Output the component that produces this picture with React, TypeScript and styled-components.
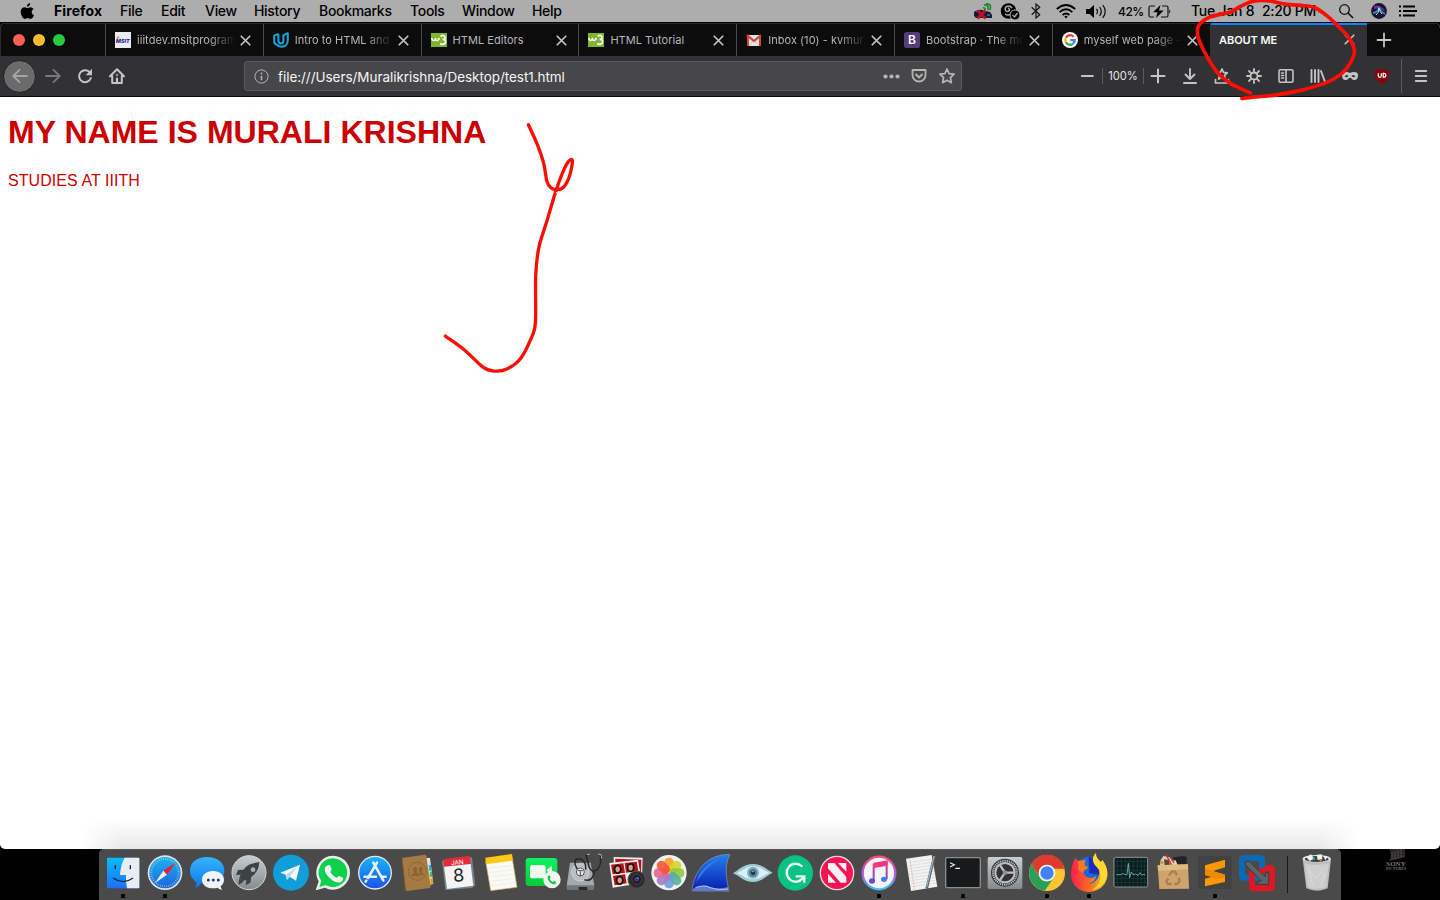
import React from "react";
import styled, { createGlobalStyle } from "styled-components";

const Global = createGlobalStyle`
  * { box-sizing: border-box; }
  body { margin: 0; background: #000; overflow: hidden; }
`;

const Screen = styled.div`
  position: relative;
  width: 1440px;
  height: 900px;
  display: flex;
  flex-direction: column;
  background: #000;
  overflow: hidden;
  font-family: Inter, "Liberation Sans", sans-serif;
`;

/* ---------- menu bar ---------- */
const MenuBar = styled.header`
  height: 23px;
  flex: none;
  display: flex;
  justify-content: space-between;
  background: #adadad;
  border-bottom: 1px solid #000;
  color: #000;
`;
const MenuGroup = styled.div`
  display: flex;
  height: 22px;
  align-items: center;
`;
const MenuItem = styled.span<{ $w: number; $bold?: boolean; $ls?: number }>`
  width: ${(p) => p.$w}px;
  font-size: 14px;
  line-height: 22px;
  font-weight: ${(p) => (p.$bold ? 700 : 500)};
  letter-spacing: ${(p) => p.$ls ?? -0.3}px;
  white-space: pre;
`;
const StatusSlot = styled.span<{ $w: number }>`
  width: ${(p) => p.$w}px;
  height: 22px;
  display: flex;
  align-items: center;
  justify-content: center;
  flex: none;
`;
const Battery = styled.span`
  width: 30px;
  font-size: 12px;
  font-weight: 500;
  letter-spacing: -0.45px;
`;
const Svg = styled.svg`
  display: block;
  flex: none;
  overflow: visible;
`;

/* ---------- browser ---------- */
const Browser = styled.section`
  height: 826px;
  flex: none;
  display: flex;
  flex-direction: column;
  border-radius: 5px;
  overflow: hidden;
  background: #fff;
`;
const TabStrip = styled.div`
  height: 33px;
  flex: none;
  display: flex;
  background: #0c0c0d;
  border-top: 1px solid #2b2b2c;
  border-left: 1px solid #2b2b2c;
`;
const Lights = styled.div`
  width: 104px;
  display: flex;
  align-items: center;
  gap: 8px;
  padding-left: 12px;
`;
const Light = styled.i<{ $c: string }>`
  width: 12px;
  height: 12px;
  border-radius: 50%;
  background: ${(p) => p.$c};
`;
const Tab = styled.div<{ $active?: boolean }>`
  width: 157.8px;
  flex: none;
  margin-top: ${(p) => (p.$active ? -1 : 0)}px;
  display: flex;
  align-items: center;
  padding-left: ${(p) => (p.$active ? 8.5 : 9)}px;
  border-left: 1px solid ${(p) => (p.$active ? "#323234" : "#4c4c4d")};
  background: ${(p) => (p.$active ? "#323234" : "transparent")};
  box-shadow: ${(p) => (p.$active ? "inset 0 2px 0 #0a84ff" : "none")};
`;
const Favicon = styled.span`
  width: 16px;
  height: 16px;
  margin-right: 6px;
  flex: none;
`;
const TabTitle = styled.span<{ $active?: boolean; $fade?: boolean; $w: number }>`
  width: ${(p) => p.$w}px;
  white-space: nowrap;
  font-size: 11px;
  line-height: 16px;
  letter-spacing: ${(p) => (p.$active ? -0.08 : 0.04)}px;
  font-weight: ${(p) => (p.$active ? 600 : 400)};
  color: ${(p) => (p.$active ? "#f9f9fa" : "#b5b5b6")};
  mask-image: ${(p) => (p.$fade ? "linear-gradient(to right, #000 72%, transparent 100%)" : "none")};
`;
const CloseSlot = styled.span`
  width: 20px;
  display: flex;
  justify-content: center;
`;
const NewTab = styled.span`
  width: 34px;
  display: flex;
  align-items: center;
  justify-content: center;
`;
const Toolbar = styled.div`
  height: 41px;
  flex: none;
  display: flex;
  align-items: center;
  padding-left: 3px;
  background: #323234;
  border-bottom: 1px solid #0c0c0d;
`;
const BackButton = styled.span`
  width: 33px;
  height: 33px;
  flex: none;
  border-radius: 50%;
  border: 1px solid #202022;
  background: #6b6b6c;
  display: flex;
  align-items: center;
  justify-content: center;
`;
const ToolSlot = styled.span<{ $w?: number }>`
  width: ${(p) => p.$w ?? 32}px;
  height: 32px;
  flex: none;
  display: flex;
  align-items: center;
  justify-content: center;
`;
const UrlBar = styled.div`
  width: 718px;
  height: 30px;
  margin-left: 111px;
  flex: none;
  display: flex;
  align-items: center;
  background: #474749;
  border: 1px solid #5a5a5c;
  border-radius: 3px;
`;
const UrlText = styled.span`
  flex: 1;
  padding: 1px 0 0 1px;
  font-size: 13.5px;
  line-height: 18px;
  letter-spacing: -0.05px;
  color: #f5f5f6;
`;
const Divider = styled.i<{ $h: number }>`
  width: 1px;
  height: ${(p) => p.$h}px;
  background: #5b5b5d;
  flex: none;
`;
const Zoom = styled.span`
  width: 41px;
  text-align: center;
  font-size: 11.2px;
  letter-spacing: -0.1px;
  color: #e4e4e5;
`;
const Page = styled.main`
  flex: 1;
  display: flex;
  flex-direction: column;
  padding: 17px 8px 0;
  color: #cc0000;
  font-family: "Liberation Sans", Arial, sans-serif;
`;
const Heading = styled.h1`
  margin: 0;
  font-size: 32px;
  line-height: 36px;
  font-weight: 700;
  letter-spacing: 0.03px;
  white-space: nowrap;
`;
const Paragraph = styled.p`
  margin: 22px 0 0;
  font-size: 16px;
  line-height: 18px;
  letter-spacing: 0.06px;
`;
const DockShade = styled.div`
  height: 30px;
  margin: auto 72px 0;
  background: linear-gradient(to bottom, rgba(0, 0, 0, 0), rgba(0, 0, 0, 0.09));
  mask-image: linear-gradient(to right, transparent, #000 40px, #000 calc(100% - 40px), transparent);
`;

/* ---------- dock ---------- */
const Desktop = styled.footer`
  flex: 1;
  display: flex;
  padding-left: 99px;
`;
const Dock = styled.div`
  width: 1242px;
  height: 51px;
  flex: none;
  display: flex;
  padding: 2px 3px 0;
  background: #4a4a4a;
  border-top: 1px solid #555;
  border-radius: 5px 5px 0 0;
`;
const DockItem = styled.div`
  width: 42px;
  flex: none;
  display: flex;
  flex-direction: column;
  align-items: center;
  margin-top: -1px;
`;
const RunningDot = styled.i`
  width: 4px;
  height: 4px;
  margin-top: 1px;
  border-radius: 1px;
  background: #000;
`;
const DockDivider = styled.i`
  width: 1px;
  height: 37px;
  flex: none;
  margin: 4px 8px 0 9px;
  background: #191919;
`;
const Wallpaper = styled.div`
  margin-left: 44px;
  width: 22px;
  display: flex;
  flex-direction: column;
  align-items: center;
  color: #777;
  font-family: "Liberation Serif", serif;
  font-size: 7px;
  font-weight: 700;
  line-height: 6px;
`;
const WallSmall = styled.span`
  font-size: 4px;
  line-height: 3px;
`;
const Ink = styled.svg`
  position: absolute;
  inset: 0;
  pointer-events: none;
`;

const Line = ({ d, c = "#c4c4c5", w = 2, s = 16 }: { d: string; c?: string; w?: number; s?: number }) => (
  <Svg width={s} height={s} viewBox="0 0 16 16" fill="none" stroke={c} strokeWidth={w} strokeLinecap="round" strokeLinejoin="round">
    <path d={d} />
  </Svg>
);

const favicons: Record<string, React.ReactNode> = {
  msit: (
    <>
      <rect width="16" height="16" fill="#ececf0" />
      <circle cx="3" cy="5.7" r="1.4" fill="#e7a13c" />
      <text x="0.8" y="11" fontSize="5.4" fontWeight="800" fontStyle="italic" fill="#22209a" textLength="14" lengthAdjust="spacingAndGlyphs">MSIT</text>
    </>
  ),
  udacity: (
    <path d="M5.400 1.800 1.200 3.600v5.200c0 2.600 1.500 4 3.700 4.300M5.400 1.800v6.800c0 1.900.9 2.900 2.500 2.900 1.600 0 2.500-1 2.500-2.900V3.100l4.400-1.900v7.400c0 3.900-2.500 6.200-6 6.200-2.200 0-3.900-.7-5-2.200" fill="none" stroke="#14a4db" strokeWidth="2" strokeLinejoin="round" />
  ),
  w3: (
    <>
      <rect y="1" width="16" height="14" fill="#7fb42f" />
      <path d="M.8 6c.2 3 2.700 3.400 3.700.6.600 2.800 3.200 2.400 3.700-.6" fill="none" stroke="#fff" strokeWidth="1.700" strokeLinejoin="round" />
      <path d="M9.600 4.200c2-1.300 4.500-.8 4.500 1.200 0 1.300-1.200 1.900-2.500 1.900 2 0 3.200.9 3 2.600-.3 2.600-3.600 3-5.400 1.600" fill="none" stroke="#fff" strokeWidth="1.700" />
    </>
  ),
  gmail: (
    <>
      <rect x="1" y="3" width="14" height="11" fill="#e3e3e3" />
      <path d="M1 3.200 8 9l7-5.800" fill="none" stroke="#d14836" strokeWidth="2.200" />
      <path d="M2 3.500V14M14 3.500V14" stroke="#d14836" strokeWidth="2" />
      <path d="m3 14 4-4.500M13 14 9 9.500" stroke="#bbb" strokeWidth=".6" />
    </>
  ),
  bootstrap: (
    <>
      <rect width="16" height="16" rx="2.500" fill="#563d7c" />
      <text x="8" y="12.300" fontSize="12" fontWeight="600" textAnchor="middle" fill="#fff">B</text>
    </>
  ),
  google: (
    <>
      <circle cx="8" cy="8" r="8" fill="#fff" />
      <g fill="none" strokeWidth="2.300">
        <path d="M11.500 4.700A4.700 4.700 0 0 0 3.900 5.700" stroke="#ea4335" />
        <path d="M3.900 5.700a4.700 4.700 0 0 0 0 4.600" stroke="#fbbc05" />
        <path d="M3.900 10.300a4.700 4.700 0 0 0 7.200 1.300" stroke="#34a853" />
        <path d="M11.100 11.600A4.700 4.700 0 0 0 12.700 8.100H8.200" stroke="#4285f4" />
      </g>
    </>
  ),
};

const tabs: [string, string, boolean][] = [
  ["msit", "iiitdev.msitprogram", true],
  ["udacity", "Intro to HTML and", true],
  ["w3", "HTML Editors", false],
  ["w3", "HTML Tutorial", false],
  ["gmail", "Inbox (10) - kvmur", true],
  ["bootstrap", "Bootstrap · The mo", true],
  ["google", "myself web page -", true],
];

const menus: [string, number][] = [
  ["File", 41], ["Edit", 44], ["View", 49], ["History", 65], ["Bookmarks", 91], ["Tools", 52], ["Window", 70], ["Help", 40],
];

const CloseX = () => <Line d="M4 4l8 8M12 4l-8 8" w={1.6} s={17} />;

/* Dock artwork: each drawing is 126 units square, starting at its own x. */
type App = { name: string; x: number; on?: boolean; art: React.ReactNode };

const petals = ["#ff9d1e", "#d7d52b", "#8fca3d", "#4fb58e", "#6f9bdd", "#a57cc4", "#e0669a", "#f4553a"];

const apps: App[] = [
  {
    name: "finder", x: 36, on: true, art: (
      <>
        <rect x="51" y="113" width="97" height="92" rx="3" fill="url(#finder)" />
        <path d="M104 113h41q3 0 3 3v86q0 3-3 3h-34q-4-18-3-40H90q2-32 14-52z" fill="#e8edf5" />
        <path d="M76 137v9M121 137v9" stroke="#10243e" strokeWidth="4" strokeLinecap="round" />
        <path d="M70 175q30 20 58 0" fill="none" stroke="#10243e" strokeWidth="3.500" strokeLinecap="round" />
      </>
    ),
  },
  {
    name: "safari", x: 162, on: true, art: (
      <>
        <circle cx="225" cy="158" r="52" fill="#dfe3e6" />
        <circle cx="225" cy="158" r="47" fill="url(#safari)" />
        <circle cx="225" cy="158" r="41" fill="none" stroke="#b6e1f7" strokeWidth="6" strokeDasharray="1.500 4.940" />
        <path d="M257 128 220 152l11 12z" fill="#ec2029" />
        <path d="M195 189l25-37 11 12z" fill="#f1f1f1" />
      </>
    ),
  },
  {
    name: "messages", x: 288, art: (
      <>
        <path d="M351 111c31 0 52 17 52 41s-21 41-52 41c-7 0-13-1-18-3-4 7-10 12-19 15 5-6 6-13 5-19-12-8-19-20-19-34 0-24 20-41 51-41z" fill="url(#blue)" />
        <path d="M369 153c20 0 33 11 33 26 0 8-4 15-10 19 0 5 2 8 5 11-7-1-11-3-14-6-4 1-9 2-14 2-20 0-33-11-33-26s13-26 33-26z" fill="#eff5fb" />
        <g fill="#1a3f86"><circle cx="355" cy="180" r="4.500" /><circle cx="370" cy="180" r="4.500" /><circle cx="385" cy="180" r="4.500" /></g>
      </>
    ),
  },
  {
    name: "launchpad", x: 414, art: (
      <>
        <circle cx="477" cy="158" r="51" fill="url(#steel)" stroke="#d2d5d6" strokeWidth="3" />
        <path d="M508 127c-25 2-37 8-47 22l-17 1-6 15 14-1-4 9 11 9 10-2-2 16 14-8 3-18c15-10 23-23 24-43z" fill="#3e4244" />
        <circle cx="489" cy="149" r="7" fill="#a7b0b2" />
        <path d="M449 174q-4 8-3 20 9-3 15-11z" fill="#3e4244" />
      </>
    ),
  },
  {
    name: "telegram", x: 540, art: (
      <>
        <circle cx="603" cy="158" r="54" fill="#109ed9" />
        <path d="M571 158l59-24-12 48-19-12-8 9-4-15z" fill="#f5fafc" />
        <path d="m587 164 34-23-22 29-8 9z" fill="#bdd9e8" />
      </>
    ),
  },
  {
    name: "whatsapp", x: 666, art: (
      <>
        <path d="M729 107a51 51 0 1 1-24 96l-28 8 9-27a51 51 0 0 1 43-77z" fill="#eceeed" />
        <path d="M729 115a43 43 0 1 1-22 80l-19 6 6-18a43 43 0 0 1 35-68z" fill="#0bd14c" />
        <path d="M711 137c4-3 8-3 10 1l4 9c1 4-5 7-4 9 4 8 10 13 18 17 3 1 6-6 9-5l10 5c4 2-1 10-5 13-16 9-50-20-49-39 0-5 3-8 7-10z" fill="#f4f7f5" />
      </>
    ),
  },
  {
    name: "appstore", x: 792, art: (
      <>
        <circle cx="855" cy="158" r="51" fill="#e6eaf0" />
        <circle cx="855" cy="158" r="47" fill="url(#store)" />
        <g fill="none" stroke="#e9f3ff" strokeWidth="7.500" strokeLinecap="round">
          <path d="m850 128 30 53M861 128l-27 46M823 170h35M874 170h13M829 182l-2 3" />
        </g>
      </>
    ),
  },
  {
    name: "contacts", x: 18, art: (
      <>
        <path d="M105 113l15 1 10 78-22 5z" fill="#dfe5ea" />
        <path d="M116 135l7 0 1 17-7 0z" fill="#23aee0" /><path d="M119 155h7l1 16h-8z" fill="#54bb4a" /><path d="M121 175h8v17h-8z" fill="#f39a1e" />
        <path d="M36 116q0-3 4-3l64-9q4 0 5 4l13 91q0 4-4 5l-66 9q-4 0-5-4z" fill="#a67a43" />
        <path d="M36 116l10 97" stroke="#7b5427" strokeWidth="3" />
        <circle cx="82" cy="154" r="27" fill="none" stroke="#8c6430" strokeWidth="2.500" />
        <path d="M63 168c2-6 9-7 9-10-4-7-5-16 3-18 7 0 8 8 5 17 1 4 8 4 10 12zM88 164c1-3 0-6 0-9-3-9-1-15 5-15 7 1 7 11 3 17 0 3 6 4 7 9z" fill="#8c6430" />
      </>
    ),
  },
  {
    name: "calendar", x: 144, art: (
      <>
        <path d="M156 123l12-6 78-5 10 84-10 8-80 6z" fill="#758290" />
        <path d="M160 118l78-11 4 25-79 11z" fill="#e52b38" />
        <path d="M162 140l80-8 8 65-79 10z" fill="#f4f4f5" />
        <text x="183" y="134" fontSize="19" fill="#fff" transform="rotate(-5 200 128)">JAN</text>
        <text x="206" y="185" fontSize="54" textAnchor="middle" fill="#222" transform="rotate(-4 206 165)">8</text>
      </>
    ),
  },
  {
    name: "notes", x: 270, art: (
      <>
        <path d="M287 124l80-8 14 86-79 10z" fill="#fafaf5" stroke="#cfa44a" strokeWidth="2" />
        <path d="M286 113l80-11 3 20-81 11z" fill="#fbc913" />
        {[0, 1, 2, 3, 4].map((i) => <path key={i} d={`M${292 + i * 2} ${145 + i * 13}l80-9`} stroke="#dededa" strokeWidth="1.200" />)}
      </>
    ),
  },
  {
    name: "facetime", x: 396, art: (
      <>
        <rect x="407" y="114" width="95" height="84" rx="9" fill="url(#green)" />
        <rect x="420" y="135" width="47" height="40" rx="8" fill="#effbf0" />
        <path d="M469 151l15-14q3 0 2 6v25z" fill="#e2f5e4" />
        <circle cx="486" cy="179" r="26" fill="#f3f5f4" />
        <path d="M474 168c4-4 7-1 8 4l-3 5q4 7 9 9l5-3c5 2 7 6 3 9-10 5-27-12-22-24z" fill="#14c943" />
      </>
    ),
  },
  {
    name: "diskutility", x: 522, art: (
      <>
        <path d="M540 128h62l11 70-4 12h-76l-3-12z" fill="#a4a9ad" />
        <path d="M530 196h83l-4 14h-76z" fill="#6f757a" /><path d="M566 201h26v9h-26z" fill="#2a2c2e" />
        <circle cx="571" cy="157" r="26" fill="#b9bec1" stroke="#dbdfe2" strokeWidth="2" />
        <circle cx="571" cy="156" r="12" fill="#e8eaeb" stroke="#555" strokeWidth="3" />
        <path d="M571 154v14M564 152h14" stroke="#444" strokeWidth="3" />
        <path d="M587 149c2-24-12-36-27-32-8 4-6 20 2 30M592 104c-4 1-3 6-1 12 5 20 6 36 20 38 16-4 22-22 21-40 0-6 0-9-4-11M613 154c-1 18-12 32-30 25" fill="none" stroke="#24282a" strokeWidth="4.500" />
        <path d="M599 102l-8 2M624 102l9 2q3 4 1 11" stroke="#b3b8bb" strokeWidth="3" fill="none" />
      </>
    ),
  },
  {
    name: "photobooth", x: 648, art: (
      <>
        <path d="M671 111l87 2-2 62-84-3z" fill="#eee" /><path d="M676 116l78 3-1 50-77-4z" fill="#b90f18" />
        <path d="M658 129l86-10 12 70-88 14z" fill="#eee" />
        <path d="M663 134l37-4 5 28-37 5zM704 129l36-4 5 28-37 5zM669 168l36-5 5 27-36 6z" fill="#b90f18" />
        {[[683, 148], [722, 143], [689, 181]].map(([x, y]) => (
          <g key={x}><ellipse cx={x} cy={y} rx="12" ry="14" fill="#1d0f10" /><ellipse cx={x} cy={y} rx="6.500" ry="8.500" fill="#d8a18c" /></g>
        ))}
        <circle cx="740" cy="179" r="26" fill="#2b2c2e" stroke="#505255" strokeWidth="3" />
        <circle cx="740" cy="178" r="14" fill="#131722" stroke="#555" strokeWidth="2" /><circle cx="740" cy="178" r="8" fill="#433171" /><circle cx="743" cy="174" r="3" fill="#3b9aaa" />
      </>
    ),
  },
  {
    name: "photos", x: 774, art: (
      <>
        <circle cx="837" cy="158" r="53" fill="#f1f1f0" />
        {petals.map((c, i) => <rect key={c} x="823" y="113" width="28" height="44" rx="13" fill={c} opacity=".9" transform={`rotate(${i * 45} 837 159)`} />)}
      </>
    ),
  },
  {
    name: "wireshark", x: 0, art: (
      <>
        <path d="M6 212c7-63 47-109 113-109q3 4-3 9c-12 28-8 63 1 101z" fill="url(#fin)" stroke="#8599b8" strokeWidth="2" />
        <path d="M18 191q35-60 78-76-45 12-69 48z" fill="#4c94f3" opacity=".55" />
        <path d="M9 206q27-15 50-6 28 10 56 0v14H6z" fill="#5d7bcd" /><path d="M16 203q28-10 44 0 25 10 54 4" fill="none" stroke="#dae4fb" strokeWidth="2" />
      </>
    ),
  },
  {
    name: "eye", x: 126, art: (
      <>
        <path d="M129 160c20-12 31-28 60-28s39 16 59 26c-19 8-31 28-59 28s-38-17-60-26z" fill="#9fcbd8" />
        <path d="M140 160c20-9 30-21 49-21s30 11 50 20c-19 7-30 19-50 19s-31-12-49-18z" fill="#d9f0f5" />
        <circle cx="189" cy="158" r="18" fill="#82b2c4" /><circle cx="189" cy="158" r="12" fill="#4f7f95" /><circle cx="189" cy="158" r="6" fill="#17242c" /><circle cx="189" cy="155" r="2" fill="#fff" />
      </>
    ),
  },
  {
    name: "grammarly", x: 252, art: (
      <>
        <circle cx="316" cy="159" r="53" fill="#08c383" />
        <path d="M335 138a27 27 0 1 0 4 36" fill="none" stroke="#f1f8f5" strokeWidth="7" strokeLinecap="round" />
        <path d="M317 169h26v19" fill="none" stroke="#f1f8f5" strokeWidth="7" />
      </>
    ),
  },
  {
    name: "news", x: 378, art: (
      <>
        <circle cx="441" cy="159" r="50" fill="#fb1252" stroke="#e6dfe2" strokeWidth="4" />
        <path d="M414 129h19l36 42v17h-17l-38-43z" fill="#f6f1f3" /><path d="M444 129h25v26zM414 161v27h24z" fill="#f6f1f3" />
      </>
    ),
  },
  {
    name: "itunes", x: 504, on: true, art: (
      <>
        <circle cx="567" cy="159" r="49" fill="#f7f5fa" stroke="url(#itring)" strokeWidth="7" />
        <path d="M551 183v-49l39-7v51" fill="none" stroke="url(#note)" strokeWidth="6" /><path d="M551 128l42-7v16l-42 7z" fill="#ee3b82" />
        <ellipse cx="546" cy="183" rx="9" ry="8" fill="#6b47da" /><ellipse cx="582" cy="178" rx="9" ry="8" fill="#3f7fe9" />
      </>
    ),
  },
  {
    name: "textedit", x: 630, art: (
      <>
        <path d="M648 116l77-11 17 95-79 13z" fill="#f3f2f0" />
        {[0, 1, 2, 3, 4, 5, 6, 7, 8].map((i) => <path key={i} d={`M${653 + i * 1.4} ${128 + i * 9}l73-10`} stroke="#c9ccd0" strokeWidth="1.500" />)}
        <path d="M659 115l15 96" stroke="#e9a8a4" strokeWidth="1.500" />
        <path d="M733 108l-23 98" stroke="#5c6a78" strokeWidth="8" /><path d="M732 108l-22 92" stroke="#a9bccb" strokeWidth="3" />
      </>
    ),
  },
  {
    name: "terminal", x: 756, on: true, art: (
      <>
        <rect x="767" y="113" width="104" height="90" rx="4" fill="#18191b" stroke="#829199" strokeWidth="4" />
        <path d="M780 128l13 6-13 7M796 145h14" fill="none" stroke="#ececec" strokeWidth="3.500" />
      </>
    ),
  },
  {
    name: "settings", x: 12, art: (
      <>
        <rect x="23" y="111" width="104" height="96" rx="5" fill="url(#steel)" />
        <circle cx="75" cy="158" r="42" fill="#313233" />
        <circle cx="75" cy="158" r="36" fill="none" stroke="#c6c8c9" strokeWidth="6" strokeDasharray="3.200 2.450" />
        <circle cx="75" cy="158" r="29" fill="none" stroke="#bcbebf" strokeWidth="6" />
        <path d="M75 158h29M75 158l-16-24M75 158l-16 24" stroke="#bcbebf" strokeWidth="7" /><circle cx="75" cy="158" r="7" fill="#8c8e8f" />
      </>
    ),
  },
  {
    name: "chrome", x: 138, on: true, art: (
      <>
        <circle cx="201" cy="159" r="54" fill="#fac52f" />
        <path d="M154 132a54 54 0 0 1 99 12l1 2h-53a25 25 0 0 0-23 23z" fill="#dd3b30" />
        <path d="M154 132a54 54 0 0 0 40 80l28-40a25 25 0 0 1-44-2z" fill="#2a9f57" />
        <path d="M201 134h49a54 54 0 0 0-95-3z" fill="#dd3b30" />
        <circle cx="201" cy="159" r="25" fill="#f2f5f5" /><circle cx="201" cy="159" r="20" fill="#4383ef" />
      </>
    ),
  },
  {
    name: "firefox", x: 264, on: true, art: (
      <>
        <circle cx="328" cy="158" r="48" fill="#1569d6" />
        <path d="M326 110a44 44 0 0 1 33 55l-31-5z" fill="#1b2bbc" />
        <path d="M286 113q5 6 8 10 16-2 23-4-5 9-3 18l10 4q-2 8-12 10-4 14 8 20 17 7 28-3c-3 18-18 24-32 19 25 13 47-13 41-40-4-15-17-18-18-27q0-12 9-21 0 16 16 28l3-7c16 24 22 49 6 73-32 42-102 24-100-35 1-18 6-33 13-45z" fill="url(#fox)" />
        <path d="M347 99q1 16 16 28l4-7c18 24 19 48 6 66-11 17-28 23-38 24 29-14 34-52 15-69-15-15-14-29-3-42z" fill="#ffd92e" />
        <path d="M294 123q16-2 23-4-5 9-3 18l10 4q-2 8-12 10l-6 7-10-8z" fill="#ff7a1d" />
      </>
    ),
  },
  {
    name: "activity", x: 390, art: (
      <>
        <rect x="402" y="112" width="101" height="89" rx="5" fill="#0d1d1e" stroke="#8a9498" strokeWidth="3" />
        <path d="M412 115v83M424 115v83M436 115v83M448 115v83M460 115v83M472 115v83M484 115v83M494 115v83M405 124h96M405 138h96M405 152h96M405 176h96M405 188h96" stroke="#1f4b49" strokeWidth="1.500" />
        <path d="M409 164h14l6-4 5 4h7l4-34 4 43 5-17 5 8 8-2 7 5 6-9 4 6h12" fill="none" stroke="#6bc1b1" strokeWidth="2.500" />
      </>
    ),
  },
  {
    name: "unarchive", x: 516, art: (
      <>
        <path d="M580 112l32-4 8 4v26h-40z" fill="#242426" /><path d="M541 122l9-14 20 4 12 12v16h-42z" fill="#d9cdbb" />
        <path d="M552 118l14 2 4 16-16 2z" fill="#57463a" /><path d="M573 124l14-3 6 15-18 2z" fill="#ead8bc" />
        <path d="M557 102l18 33M570 111l12 18" stroke="#cf2a25" strokeWidth="4" /><circle cx="546" cy="128" r="5" fill="#e58b32" />
        <path d="M533 136l91-3 3 73-89 1z" fill="#cda56c" /><path d="M533 136l91-3v15l-90 4z" fill="#e0bc85" />
        <g fill="none" stroke="#a98149" strokeWidth="7"><path d="M567 167l9-13h8l7 12M596 173l3 10-8 9h-8M575 192h-12l-4-8 6-9" /></g>
      </>
    ),
  },
  {
    name: "sublime", x: 642, on: true, art: (
      <>
        <rect x="654" y="108" width="101" height="99" rx="5" fill="#424242" />
        <path d="M675 136l60-17v23l-36 11 36 11v22l-60 13v-23l36-10-36-10z" fill="#ff9800" />
        <path d="M675 146l60 18v8l-24 4-36-10z" fill="#ee8900" />
      </>
    ),
  },
  {
    name: "vmware", x: 108, art: (
      <>
        <rect x="126" y="114" width="60" height="59" rx="5" fill="none" stroke="#0e69b5" strokeWidth="18" />
        <path d="M156 173v26q0 6 6 6h48q6 0 6-6v-49q0-6-6-6h-15" fill="none" stroke="#df1724" strokeWidth="18" strokeLinejoin="round" />
        <path d="M147 150l18 16v18h-18z" fill="#df1724" />
        <path d="M177 144h18v18l-8 3-10-10z" fill="#df1724" />
        <path d="M136 134v-10h11l49 46v-11h10v34h-33v-10h12z" fill="#5c6367" stroke="#34393c" strokeWidth="2.500" />
      </>
    ),
  },
];

const trash: App = {
  name: "trash", x: 288, art: (
    <>
      <path d="M308 117q42-12 85 0l-10 88q-32 14-64 0z" fill="#bcbdbe" />
      <path d="M314 130q36 10 72 0l-8 71q-28 10-54 0z" fill="#cecece" />
      <ellipse cx="350" cy="116" rx="42" ry="11" fill="#e3e5e5" /><ellipse cx="350" cy="117" rx="36" ry="9" fill="#3b4245" />
      <path d="M319 112l14-9 9 13-13 7zM350 104l15-1 2 15-14 2zM370 108l12 3-6 10z" fill="#eef2f3" /><circle cx="342" cy="116" r="4" fill="#22a2b5" /><circle cx="362" cy="122" r="4" fill="#d96a33" />
      <path d="M326 140l12 58M370 146l-20 30-20-20M376 160l-14 36" stroke="#e6e6e6" strokeWidth="3" opacity=".5" fill="none" />
    </>
  ),
};

const DockIcon = ({ app }: { app: App }) => (
  <DockItem>
    <Svg width="42" height="42" viewBox={`${app.x} 93 126 126`}>{app.art}</Svg>
    {app.on && <RunningDot />}
  </DockItem>
);

const Gradient = ({ id, stops, h }: { id: string; stops: string[]; h?: boolean }) => (
  <linearGradient id={id} x1="0" y1="0" x2={h ? 1 : 0} y2={h ? 0 : 1}>
    {stops.map((c, i) => <stop key={i} offset={i / (stops.length - 1)} stopColor={c} />)}
  </linearGradient>
);

/* Smooth curve through hand-drawn points. */
const curve = (pts: number[][]) =>
  pts.slice(1).reduce((d, p, i) => {
    const a = pts[Math.max(0, i - 1)], b = pts[i], c = pts[Math.min(pts.length - 1, i + 2)];
    return d + `C${b[0] + (p[0] - a[0]) / 6} ${b[1] + (p[1] - a[1]) / 6} ${p[0] - (c[0] - b[0]) / 6} ${p[1] - (c[1] - b[1]) / 6} ${p[0]} ${p[1]}`;
  }, `M${pts[0][0]} ${pts[0][1]}`);

const ring = curve([[1250, 92.5], [1243, 89.5], [1230, 83], [1217, 72], [1207, 57], [1200, 43], [1197, 33], [1199, 24], [1210, 16.500], [1230, 11.500], [1240, 6], [1250, 1.500], [1260, 0], [1270, 0.500], [1283, 3.500], [1300, 5], [1314, 7], [1326, 15], [1338, 26], [1349, 38], [1354, 51], [1349, 64], [1341, 73.500], [1326.500, 82], [1300, 90], [1273, 95], [1255, 96.500], [1241.500, 98]]);
const hook = curve([[528, 124.300], [537.300, 145], [543.300, 163], [546.500, 181], [550.500, 187.300], [556.700, 189.300], [563.300, 186.700], [569.300, 175], [572, 160], [567.300, 162], [561.500, 174], [555, 192], [547, 219], [538.500, 247], [535.300, 275], [535, 322], [530.500, 338.500], [520, 358.300], [507, 368.300], [495, 370.700], [483.300, 367.300], [463.500, 349], [445, 335.700]]);

export default function App() {
  return (
    <Screen>
      <Global />
      <MenuBar>
        <MenuGroup>
          <StatusSlot $w={54}>
            <Svg width="15" height="17" viewBox="0 0 15 17">
              <path d="M10.100 0c.2 1.900-1.400 3.700-3.200 3.700C6.700 1.900 8.300.2 10.100 0zM10.200 4.200c1.500 0 2.700.8 3.300 1.700-2.600 1.600-2.200 5.100.5 6.200-.7 1.900-2 3.900-3.500 3.900-1.100 0-1.400-.7-2.800-.7s-1.800.7-2.800.7C2.700 16-.1 10.600.9 7.300c.6-1.900 2.100-3 3.700-3 1.200 0 2.200.8 3 .8s1.700-.9 2.600-.9z" />
            </Svg>
          </StatusSlot>
          <MenuItem $w={66} $bold $ls={0.1}>Firefox</MenuItem>
          {menus.map(([m, w]) => <MenuItem key={m} $w={w}>{m}</MenuItem>)}
        </MenuGroup>
        <MenuGroup>
          <StatusSlot $w={28}>
            <Svg width="18" height="17" viewBox="0 0 18 17">
              <path d="M0 9q3-3 8-2l8 2 2 3v3H2l-2-2z" fill="#17183d" /><path d="M2 8h4M13 12h3" stroke="#8788a8" />
              <path d="M9 5q2-1 2 2M10 2q5-1 4 5M12 1q6-1 4 6" fill="none" stroke="#188a26" strokeWidth="1.700" />
              <path d="M3.500 7.500l8 8M11.500 7.500l-8 8" stroke="#c50f18" strokeWidth="2.700" />
            </Svg>
          </StatusSlot>
          <StatusSlot $w={25}>
            <Svg width="20" height="17" viewBox="0 0 20 17">
              <circle cx="8.500" cy="8" r="7.800" /><path d="M12 5C9 1 3 4 6 8c3 2 5-2 2-3M5 11c3 2 6 1 7-2" fill="none" stroke="#adadad" strokeWidth="1.500" />
              <circle cx="15" cy="12" r="5" stroke="#adadad" strokeWidth="1" /><path d="M12.500 12l2 2 3-4" fill="none" stroke="#adadad" strokeWidth="1.300" />
            </Svg>
          </StatusSlot>
          <StatusSlot $w={27}>
            <Svg width="10" height="16" viewBox="0 0 10 16"><path d="M.7 4.200l8 7.600L5 15V1l3.700 3.200-8 7.600" fill="none" stroke="#111" strokeWidth="1.200" /></Svg>
          </StatusSlot>
          <StatusSlot $w={33}>
            <Svg width="20" height="15" viewBox="0 0 20 15"><g fill="none" stroke="#000" strokeWidth="1.900"><path d="M.8 5q9.200-8 18.400 0M3.700 8.100q6.300-5.500 12.600 0M6.600 11q3.400-2.800 6.800 0" /></g><path d="M8.300 12.500q1.700-1.500 3.400 0L10 14.500z" /></Svg>
          </StatusSlot>
          <StatusSlot $w={29}>
            <Svg width="21" height="15" viewBox="0 0 21 15"><path d="M0 5h3.500L8 1v13l-4.500-4H0z" /><path d="M10.500 4.800q2 2.700 0 5.400M13.600 3q3.400 4.500 0 9M16.800 1.200q5 6.300 0 12.600" fill="none" stroke="#111" strokeWidth="1.200" /></Svg>
          </StatusSlot>
          <StatusSlot $w={7} />
          <Battery>42%</Battery>
          <Svg width="24" height="13" viewBox="0 0 24 13"><path d="M7 1H2.500Q1 1 1 2.500v8Q1 12 2.500 12H6M14 1h4.500Q20 1 20 2.500v8q0 1.500-1.500 1.500H13" fill="none" stroke="#111" strokeWidth="1.200" /><path d="M12.500 0 5 7.200h4.500L8 13l7.700-7.500H11zM21.300 4.500q2 2 0 4z" /></Svg>
          <StatusSlot $w={19} />
          <MenuItem $w={71} $ls={-0.25}>Tue Jan 8</MenuItem>
          <MenuItem $w={68} $ls={-0.3}>2:20 PM</MenuItem>
          <StatusSlot $w={32}>
            <Svg width="16" height="16" viewBox="0 0 16 16" fill="none" stroke="#111"><circle cx="6.500" cy="6.500" r="4.800" strokeWidth="1.300" /><path d="M10 10l5 5" strokeWidth="1.600" /></Svg>
          </StatusSlot>
          <StatusSlot $w={34}>
            <Svg width="16" height="16" viewBox="0 0 16 16"><circle cx="8" cy="8" r="7.900" fill="#16152f" /><path d="M3 3q5-2 10 3l1 3q-5-5-11-3z" fill="#7a2a93" /><path d="M2 10Q7 9 8 5q2 4 6 6" fill="none" stroke="#2f8fc4" strokeWidth="1.800" /><path d="M5 12q3-2 3-7 1 4 3 6" fill="none" stroke="#b8e4f0" strokeWidth="1" /></Svg>
          </StatusSlot>
          <StatusSlot $w={24}>
            <Svg width="18" height="12" viewBox="0 0 18 12" stroke="#000" strokeWidth="1.800"><path d="M4 1.500h12M4 6h14M4 10.500h12M0 1.500h2M0 6h2M0 10.500h2" /></Svg>
          </StatusSlot>
          <StatusSlot $w={20} />
        </MenuGroup>
      </MenuBar>

      <Browser>
        <TabStrip>
          <Lights><Light $c="#ff5f57" /><Light $c="#ffbd2e" /><Light $c="#28ca42" /></Lights>
          {tabs.map(([icon, title, fade], i) => (
            <Tab key={i}>
              <Favicon><Svg width="16" height="16" viewBox="0 0 16 16">{favicons[icon]}</Svg></Favicon>
              <TabTitle $w={98.5} $fade={fade}>{title}</TabTitle>
              <CloseSlot><CloseX /></CloseSlot>
            </Tab>
          ))}
          <Tab $active>
            <TabTitle $active $w={120.5}>ABOUT ME</TabTitle>
            <CloseSlot><CloseX /></CloseSlot>
          </Tab>
          <NewTab><Line d="M8 1.500v13M1.500 8h13" w={1.800} /></NewTab>
        </TabStrip>
        <Toolbar>
          <BackButton><Line d="M15 8H1.500M7.500 1.800 1.300 8l6.200 6.200" c="#a5a5a6" w={1.800} /></BackButton>
          <ToolSlot $w={33}><Line d="M1 8h13.500M8.500 1.800 14.700 8l-6.200 6.200" c="#78787a" w={1.800} /></ToolSlot>
          <ToolSlot><Svg width="16" height="16" viewBox="0 0 16 16"><path d="M13 4.700A6 6 0 1 0 13.800 10" fill="none" stroke="#c4c4c5" strokeWidth="2" strokeLinecap="round" /><path d="M15 .8v6.400H8.700z" fill="#c4c4c5" /></Svg></ToolSlot>
          <ToolSlot><Svg width="16" height="16" viewBox="0 0 16 16" fill="none" stroke="#c4c4c5" strokeWidth="2" strokeLinecap="round" strokeLinejoin="round"><path d="M1 8.200 8 1.200l7 7M3.200 8v7h9.600V8" /><path d="M8 10.500V15" strokeWidth="2.200" /><circle cx="8" cy="7" r=".3" /></Svg></ToolSlot>
          <UrlBar>
            <ToolSlot><Svg width="15" height="15" viewBox="0 0 15 15"><circle cx="7.500" cy="7.500" r="6.600" fill="none" stroke="#b6b6b7" /><circle cx="7.500" cy="4.500" r=".9" fill="#b6b6b7" /><path d="M7.500 6.800v4.500" stroke="#b6b6b7" strokeWidth="1.500" /></Svg></ToolSlot>
            <UrlText>file:///Users/Muralikrishna/Desktop/test1.html</UrlText>
            <ToolSlot $w={28}><Svg width="17" height="5" viewBox="0 0 17 5" fill="#b6b6b7"><circle cx="2.500" cy="2.500" r="2.100" /><circle cx="8.500" cy="2.500" r="2.100" /><circle cx="14.500" cy="2.500" r="2.100" /></Svg></ToolSlot>
            <ToolSlot $w={28}><Line d="M1.500 2h13v5a6.500 6.500 0 0 1-13 0zM5 6.500l3 3 3-3" c="#b6b6b7" w={1.800} /></ToolSlot>
            <ToolSlot $w={28}><Line d="M8 1l2.100 4.700 5 .5-3.700 3.500 1 5L8 12.200l-4.400 2.500 1-5L.9 6.200l5-.5z" c="#b6b6b7" w={1.700} /></ToolSlot>
          </UrlBar>
          <ToolSlot $w={110} />
          <ToolSlot $w={30}><Line d="M2.800 8h11" /></ToolSlot>
          <Divider $h={16} />
          <Zoom>100%</Zoom>
          <Divider $h={16} />
          <ToolSlot $w={27}><Line d="M8 1.500v13M1.500 8h13" /></ToolSlot>
          <ToolSlot $w={3} />
          <ToolSlot><Line d="M8 1v9.500M3.500 6.500 8 11l4.500-4.500M2 15h12" w={1.900} /></ToolSlot>
          <ToolSlot><Line d="M8 1l1.600 3.400 3.700.4-2.800 2.500.8 3.700L8 9.200 4.700 11l.8-3.700-2.800-2.500 3.700-.4zM1.500 11.500V15h13v-3.500" w={1.700} /></ToolSlot>
          <ToolSlot><Line d="M8 4.500a3.500 3.500 0 1 1 0 7 3.500 3.500 0 0 1 0-7zM8 1v2.500M8 12.500V15M1 8h2.500M12.500 8H15M3 3l1.800 1.800M11.200 11.200 13 13M3 13l1.800-1.800M11.200 4.800 13 3" w={1.800} /></ToolSlot>
          <ToolSlot><Line d="M2.500 1.700h11q1.500 0 1.500 1.500v9.600q0 1.500-1.500 1.500h-11Q1 14.300 1 12.800V3.200q0-1.500 1.500-1.500zM8 2v12M3.500 5h2M3.500 7.500h2M3.500 10h2" w={1.600} /></ToolSlot>
          <ToolSlot><Line d="M1.500 2v12M5 2v12M8.500 2v12M11 3l4 11" w={1.900} /></ToolSlot>
          <ToolSlot><Svg width="16" height="12" viewBox="0 0 16 12"><path fillRule="evenodd" d="M0 5Q0 2 4 2q2.500 0 4 1 1.500-1 4-1 4 0 4 3 0 5-3.500 5Q10.500 10 9.500 8.500 8 7 6.500 8.500 5.500 10 3.500 10 0 10 0 5zm2.500 1.500Q4.500 8.300 6.500 6 4.300 3.700 2.500 6.500zm7-.5q2 2.300 4 .5Q11.700 3.700 9.500 6z" fill="#c4c4c5" /></Svg></ToolSlot>
          <ToolSlot><Svg width="16" height="16" viewBox="0 0 16 16"><path d="M8 0q2.500 2 7 2v5.500q0 5-7 8.500-7-3.500-7-8.500V2Q5.500 2 8 0z" fill="#800610" /><path d="M4.300 5.200v2.600q0 1.500 1.500 1.500t1.500-1.500V5.200" fill="none" stroke="#fff" strokeWidth="1.200" /><path d="M9.200 5.400h.8a1.900 1.900 0 0 1 0 3.800h-.8z" fill="none" stroke="#fff" strokeWidth="1.200" /></Svg></ToolSlot>
          <ToolSlot $w={3} />
          <Divider $h={34} />
          <ToolSlot $w={38}><Line d="M2.800 3h10.400M2.800 8h10.400M2.800 13h10.400" /></ToolSlot>
        </Toolbar>
        <Page>
          <Heading>MY NAME IS MURALI KRISHNA</Heading>
          <Paragraph>STUDIES AT IIITH</Paragraph>
          <DockShade />
        </Page>
      </Browser>

      <Desktop>
        <Dock>
          {apps.map((a) => <DockIcon key={a.name} app={a} />)}
          <DockDivider />
          <DockIcon app={trash} />
        </Dock>
        <Wallpaper>
          <Svg width="18" height="12" viewBox="0 0 18 12"><path d="M2 0h16v8L2 12q4-6 0-12z" fill="#282828" /><path d="M5 3v6M8 2v7M11 1v7M14 0v7" stroke="#514842" /><path d="M3 11L17 7" stroke="#4a3b48" /></Svg>
          <span>SONY</span>
          <WallSmall>PICTURES</WallSmall>
        </Wallpaper>
      </Desktop>

      <Ink width="1440" height="900" viewBox="0 0 1440 900">
        <defs>
          <Gradient id="finder" stops={["#08bdfb", "#1f6ff3"]} />
          <Gradient id="safari" stops={["#1bb3ed", "#1f64dc"]} />
          <Gradient id="blue" stops={["#35b5fb", "#0a77ee"]} />
          <Gradient id="steel" stops={["#c5ced0", "#858b8d"]} />
          <Gradient id="store" stops={["#18b4fa", "#1b54ea"]} />
          <Gradient id="green" stops={["#0df362", "#07cb37"]} />
          <Gradient id="fin" stops={["#2480ed", "#0a1cae"]} />
          <Gradient id="itring" stops={["#ff4b6c", "#bb50e8", "#39c3f3"]} />
          <Gradient id="note" stops={["#f33d67", "#5a59e1"]} />
          <Gradient id="fox" h stops={["#fb1f4f", "#ff6a1e", "#ffc91f"]} />
          <filter id="chalk" x="-5%" y="-5%" width="110%" height="110%">
            <feTurbulence type="fractalNoise" baseFrequency="0.5" numOctaves={1} seed={4} />
            <feDisplacementMap in="SourceGraphic" scale={2} xChannelSelector="R" yChannelSelector="G" />
          </filter>
        </defs>
        <g fill="none" stroke="#fb0a04" strokeLinecap="round" strokeLinejoin="round" filter="url(#chalk)" transform="translate(.4 .4)">
          <path d={ring} strokeWidth="3.700" />
          <path d={hook} strokeWidth="3.300" />
        </g>
      </Ink>
    </Screen>
  );
}
